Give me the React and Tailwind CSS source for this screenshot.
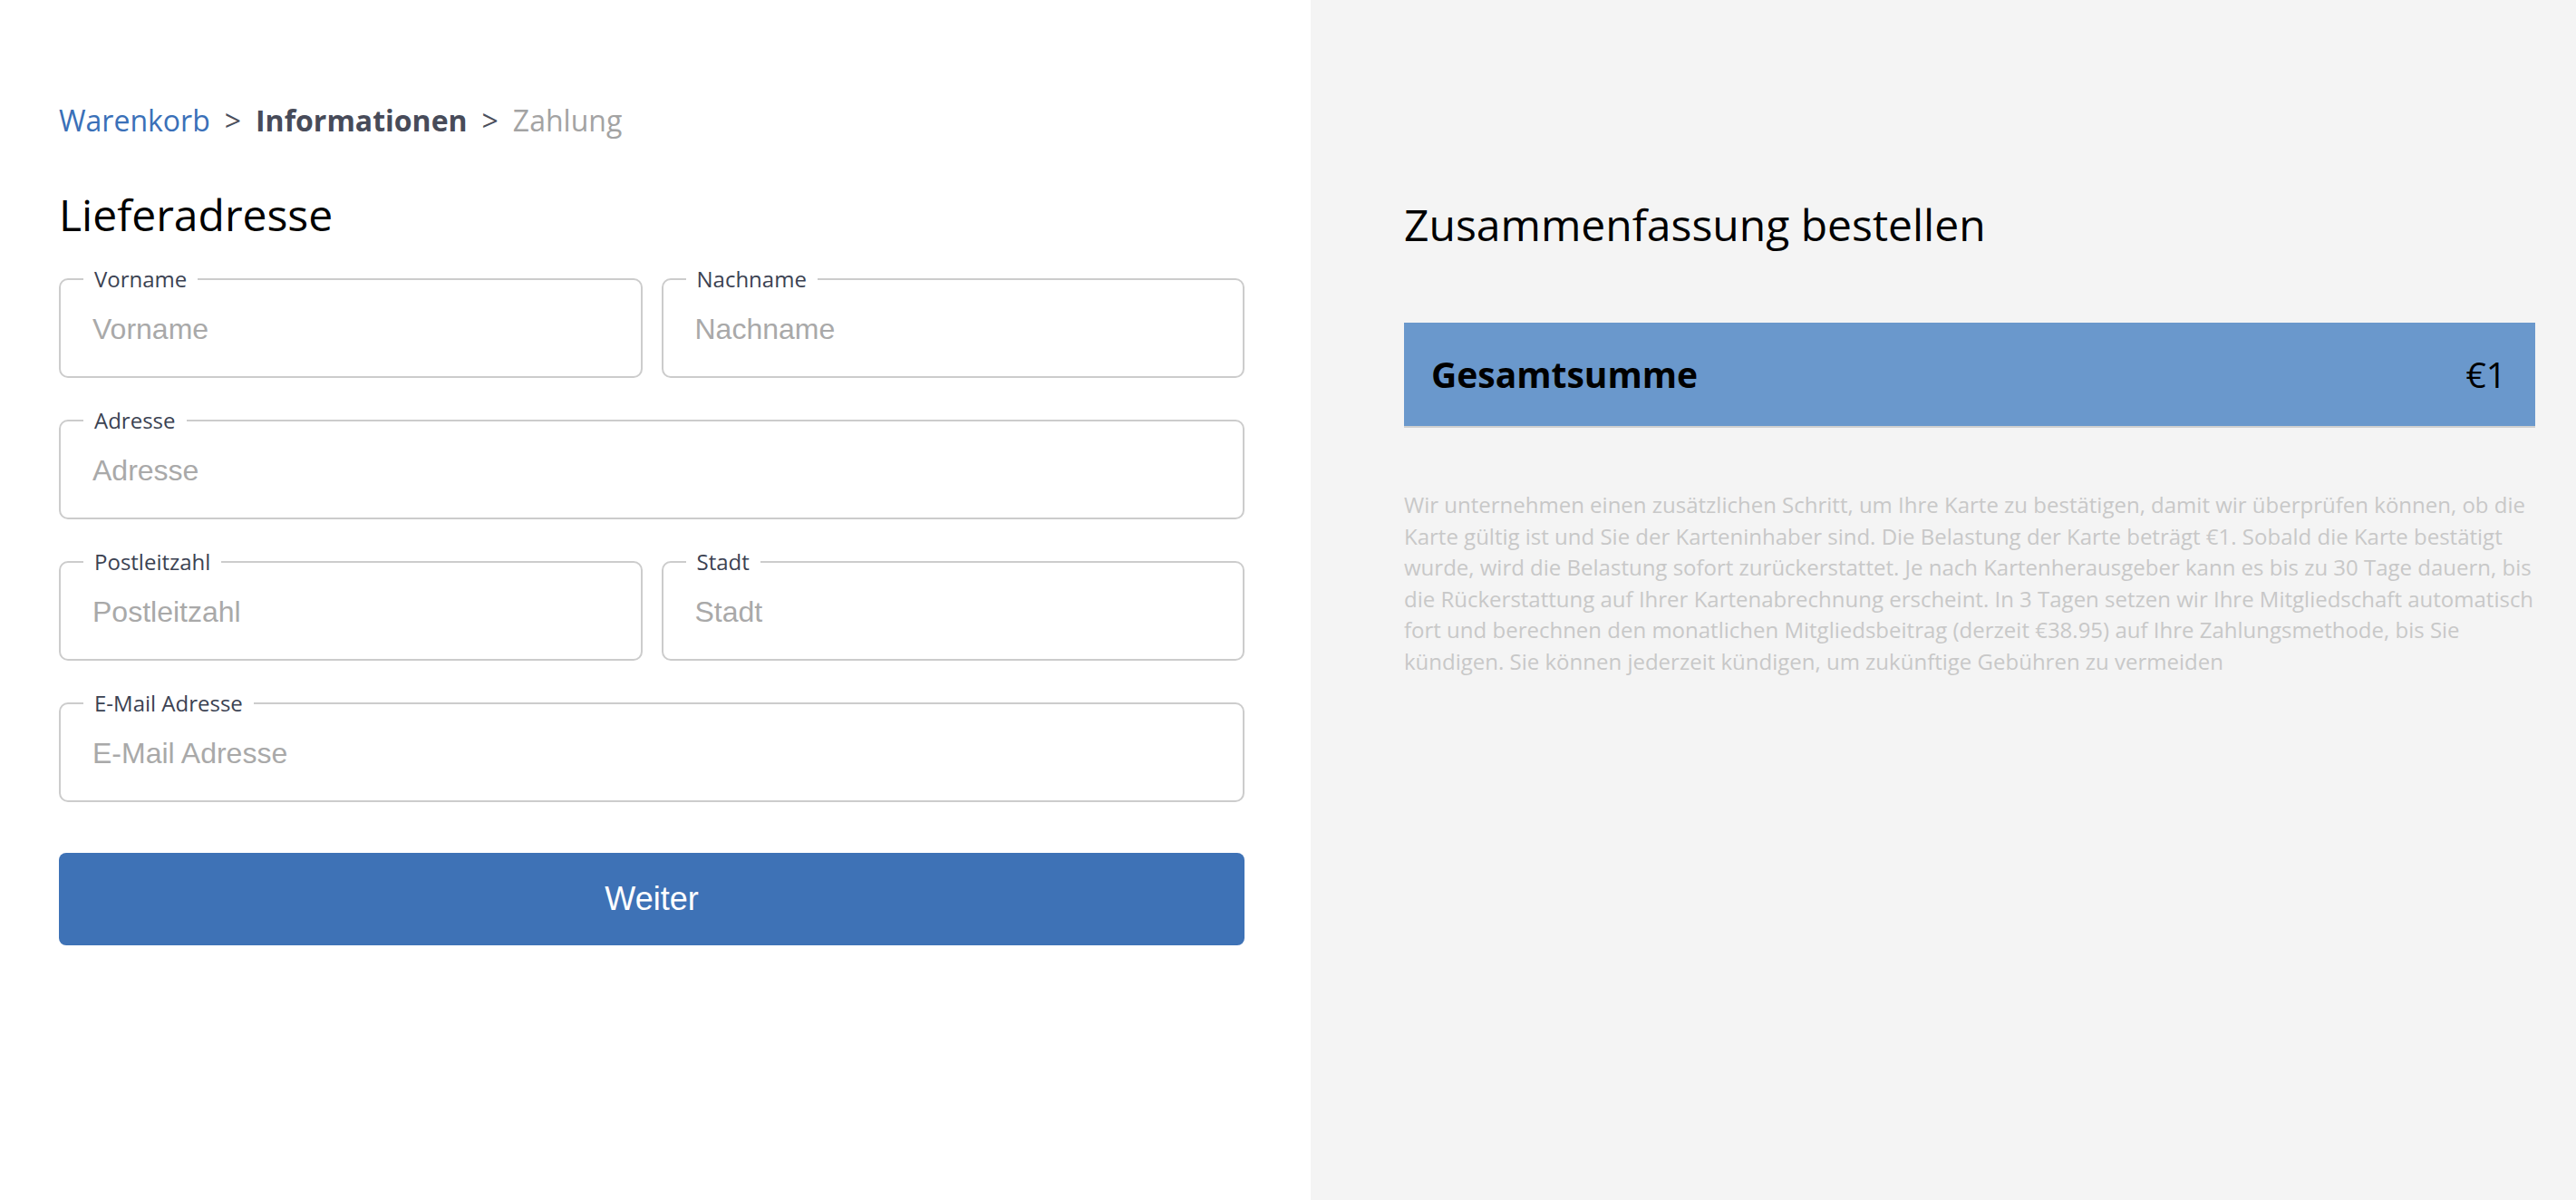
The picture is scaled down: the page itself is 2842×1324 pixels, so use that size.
import { useState } from "react";

const fields = [
  [{ name: "firstName", label: "Vorname" }, { name: "lastName", label: "Nachname" }],
  [{ name: "address", label: "Adresse" }],
  [{ name: "zip", label: "Postleitzahl" }, { name: "city", label: "Stadt" }],
  [{ name: "email", label: "E-Mail Adresse", type: "email" }],
];

const Field = ({ name, label, type = "text", value, onChange }) => (
  <fieldset className="min-w-0 border-2 border-[#cccccc] rounded-[10px] px-[25px] pb-[15px]">
    <legend className="px-3 text-[24px] leading-8 text-[#3b4252]">{label}</legend>
    <input
      type={type}
      name={name}
      value={value}
      onChange={onChange}
      placeholder={label}
      className="block w-full h-[76px] pt-[2px] px-[10px] bg-transparent outline-none text-[32px] text-[#333] placeholder:text-[#a9a9a9] font-['Liberation_Sans',Arial,sans-serif]"
    />
  </fieldset>
);

const App = () => {
  const [form, setForm] = useState({});

  const handleChange = (event) => {
    setForm({ ...form, [event.target.name]: event.target.value });
  };

  const handleSubmit = (event) => {
    event.preventDefault();
  };

  return (
    <div className="flex min-h-screen font-['Open_Sans',sans-serif]">
      {/* left: address form */}
      <div className="w-[1446px] shrink-0 bg-white pl-[65px] pr-[73px] pt-[111px]">
        <nav className="flex items-baseline gap-[16px] text-[32px] leading-[44px]">
          <a href="#" className="text-[#3a70b8]">Warenkorb</a>
          <span className="text-[#4b4f5c]">&gt;</span>
          <span className="font-bold text-[#474b59]">Informationen</span>
          <span className="text-[#4b4f5c]">&gt;</span>
          <span className="text-[#a3a3a3]">Zahlung</span>
        </nav>

        <h1 className="mt-[53px] text-[48px] leading-[58px] text-black">Lieferadresse</h1>

        <form onSubmit={handleSubmit} className="mt-[26px] flex flex-col gap-[31px]">
          {fields.map((row, i) => (
            <div key={i} className={row.length > 1 ? "grid grid-cols-2 gap-x-[21px]" : ""}>
              {row.map((f) => (
                <Field key={f.name} {...f} value={form[f.name] || ""} onChange={handleChange} />
              ))}
            </div>
          ))}
          <button
            type="submit"
            className="mt-[25px] h-[102px] rounded-[8px] bg-[#3e72b6] text-white text-[36px] font-['Liberation_Sans',Arial,sans-serif]"
          >
            Weiter
          </button>
        </form>
      </div>

      {/* right: order summary */}
      <div className="flex-1 bg-[#f4f4f4] pl-[103px] pr-[45px] pt-[219px]">
        <h2 className="text-[48px] leading-[58px] text-black">Zusammenfassung bestellen</h2>
        <div className="mt-[79px] h-[116px] flex items-center justify-between bg-[#6a98cc] border-b-2 border-[#d0d0d0] pl-[30px] pr-[32px] text-[39px] text-black">
          <span className="font-bold">Gesamtsumme</span>
          <span>€1</span>
        </div>
        <p className="mt-[68px] text-[24px] leading-[34.5px] text-[#c8c8c8]">
          Wir unternehmen einen zusätzlichen Schritt, um Ihre Karte zu bestätigen, damit wir überprüfen
          können, ob die Karte gültig ist und Sie der Karteninhaber sind. Die Belastung der Karte beträgt
          €1. Sobald die Karte bestätigt wurde, wird die Belastung sofort zurückerstattet. Je nach
          Kartenherausgeber kann es bis zu 30 Tage dauern, bis die Rückerstattung auf Ihrer
          Kartenabrechnung erscheint. In 3 Tagen setzen wir Ihre Mitgliedschaft automatisch fort und
          berechnen den monatlichen Mitgliedsbeitrag (derzeit €38.95) auf Ihre Zahlungsmethode, bis Sie
          kündigen. Sie können jederzeit kündigen, um zukünftige Gebühren zu vermeiden
        </p>
      </div>
    </div>
  );
};

export default App;
